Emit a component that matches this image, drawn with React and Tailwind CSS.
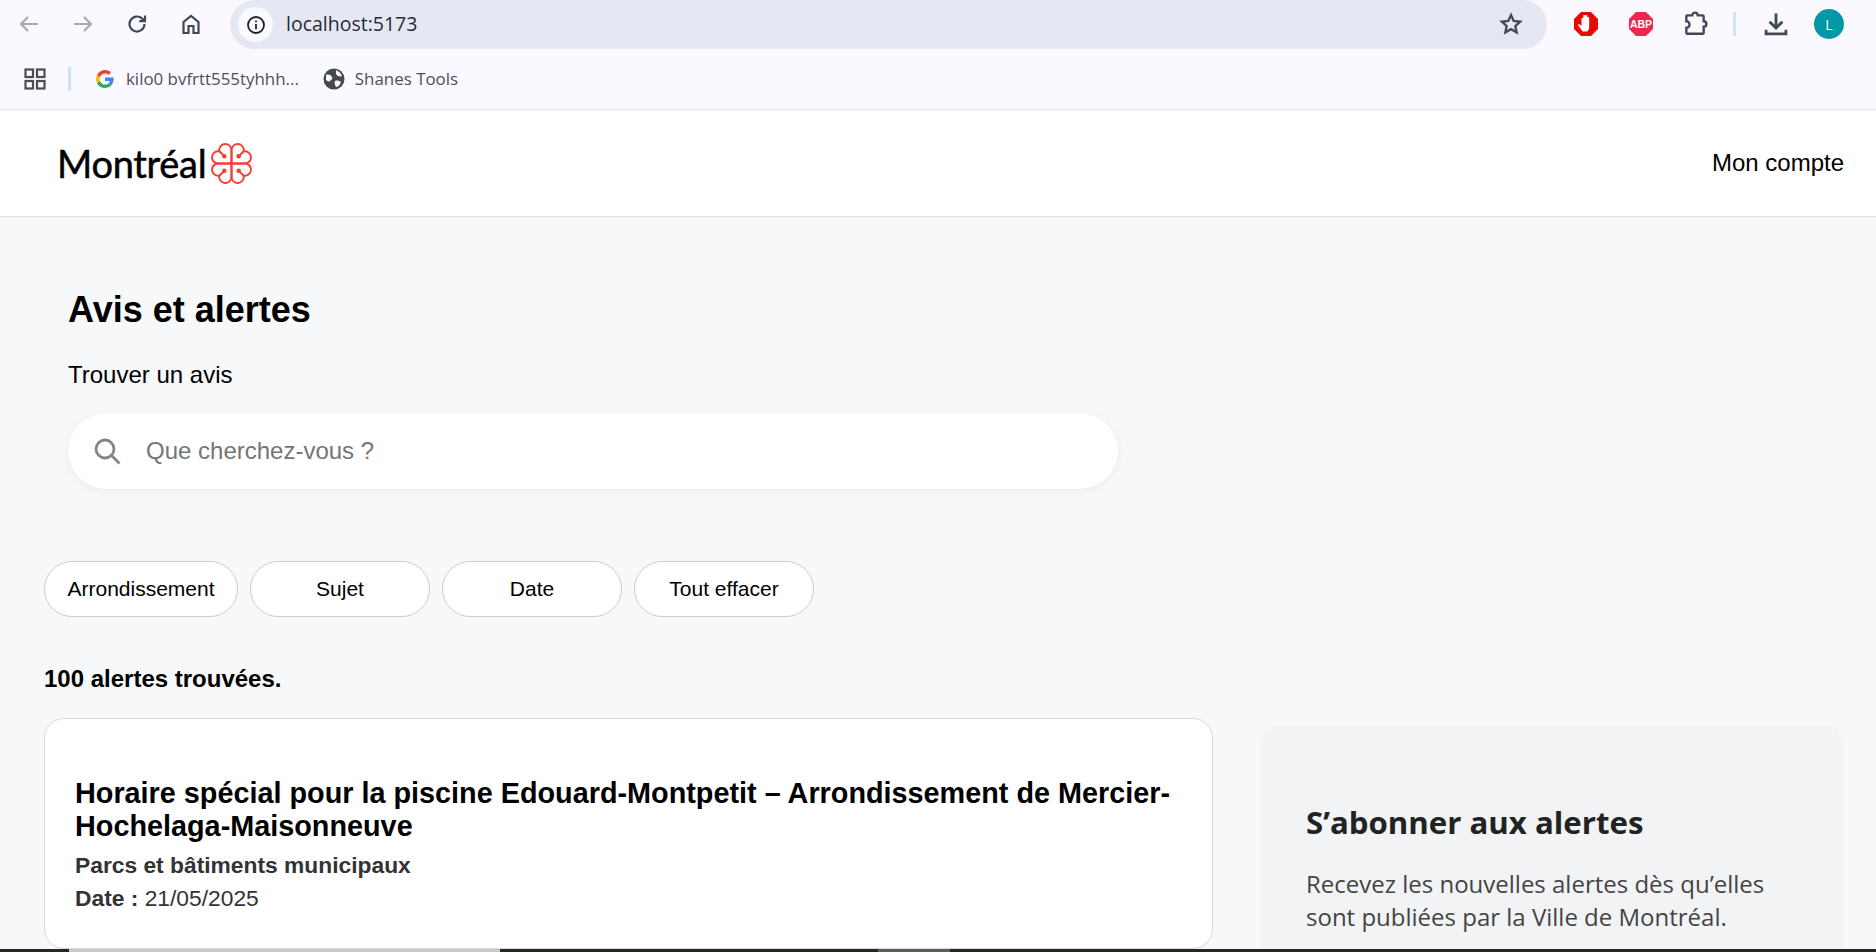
import React from "react";

const sans = "font-['Liberation_Sans',Arial,sans-serif]";

function Emblem() {
  const q = (
    <g>
      <path d="M20 20V7A6 6 0 1 1 31.9 8.100A6 6 0 1 1 33 20H20" />
      <path d="M31.900 8.100L27.500 12.500" />
      <circle cx="27" cy="13" r="2.200" fill="#ef4136" stroke="none" />
    </g>
  );
  return (
    <svg width="41" height="41" viewBox="0 0 40 40" fill="none" stroke="#ef4136" strokeWidth="1.9">
      {q}
      <g transform="rotate(90 20 20)">{q}</g>
      <g transform="rotate(180 20 20)">{q}</g>
      <g transform="rotate(270 20 20)">{q}</g>
    </svg>
  );
}

function GLogo() {
  return (
    <svg width="18" height="18" viewBox="0 0 48 48">
      <path fill="#EA4335" d="M24 9.5c3.5 0 6.7 1.2 9.2 3.6l6.9-6.9C35.9 2.4 30.5 0 24 0 14.6 0 6.5 5.4 2.6 13.2l8 6.2C12.5 13.6 17.8 9.5 24 9.5z" />
      <path fill="#4285F4" d="M47 24.5c0-1.600-.1-3.100-.4-4.500H24v9h12.900c-.6 3-2.200 5.500-4.700 7.200l7.300 5.700C43.900 37.900 47 31.800 47 24.500z" />
      <path fill="#FBBC05" d="M10.500 28.600c-.5-1.400-.8-3-.8-4.600s.3-3.200.8-4.600l-8-6.200C1 16.400 0 20.100 0 24s1 7.600 2.600 10.800l7.900-6.200z" />
      <path fill="#34A853" d="M24 48c6.500 0 11.900-2.100 15.900-5.800l-7.300-5.700c-2.200 1.400-5 2.300-8.600 2.300-6.200 0-11.500-4.200-13.400-9.800l-8 6.200C6.500 42.600 14.600 48 24 48z" />
    </svg>
  );
}

function ToolbarIcon({ children, size = 24, className = "", sw = 2.2 }) {
  return (
    <svg width={size} height={size} viewBox="0 0 24 24" fill="none" stroke="currentColor" strokeWidth={sw} className={className}>
      {children}
    </svg>
  );
}

function Chrome() {
  return (
    <div className="h-[110px] shrink-0 bg-[#faf9ff] border-b border-[#e2e2ef] font-['Open_Sans',sans-serif]">
      <div className="h-[49px] flex items-center pl-[17px]">
        <div className="flex items-center gap-[30px] w-[213px] -mt-[1px]">
          <ToolbarIcon className="text-[#a9abb3]"><path d="M21 12H4M11 5l-7 7 7 7" /></ToolbarIcon>
          <ToolbarIcon className="text-[#a9abb3]"><path d="M3 12h17M13 5l7 7-7 7" /></ToolbarIcon>
          <ToolbarIcon className="text-[#414856]"><path d="M19.500 12a7.500 7.500 0 1 1-2.300-5.400L20 9.200M20 3.500v5.700h-5.700" /></ToolbarIcon>
          <ToolbarIcon className="text-[#414856]"><path d="M4.500 21V10L12 4l7.500 6v11h-5v-7h-5v7z" /></ToolbarIcon>
        </div>
        <div className="w-[1317px] h-[49px] rounded-full bg-[#e5e8f3] flex items-center pl-[8px] pr-[23px]">
          <div className="w-[35px] h-[35px] rounded-full bg-[#faf9ff] flex items-center justify-center">
            <svg width="20" height="20" viewBox="0 0 20 20" fill="none" stroke="#1f1f24" strokeWidth="1.8">
              <circle cx="10" cy="10" r="8" />
              <path d="M10 9v5.200M10 5.400v1.800" />
            </svg>
          </div>
          <span className="ml-[13px] -mt-[1px] text-[19.5px] text-[#252a33]">localhost:5173</span>
          <ToolbarIcon size={26} className="ml-auto -mt-[1px] text-[#474b55]">
            <path d="M12 3.800l2.500 5.400 5.900.7-4.400 4 1.200 5.800-5.200-2.900-5.200 2.900 1.200-5.800-4.400-4 5.900-.7z" />
          </ToolbarIcon>
        </div>
        <div className="flex-1 flex items-center pl-[26px] -mt-[1px]">
          <svg width="26" height="26" viewBox="0 0 26 26">
            <path d="M8 1h10l7 7v10l-7 7H8l-7-7V8z" fill="#e60a05" />
            <path d="M8 20c-1-2-4-5-4.500-7 1-.8 2.500.2 3.500 1.500V7.500c0-1.400 1.800-1.400 1.800 0V12V4.500c0-1.400 2-1.400 2 0V12V4.500c0-1.400 2-1.400 2 0V12V6.500c0-1.400 1.900-1.400 1.900 0v9c0 2-1 4-2 4.500z" fill="#fff" transform="translate(1.500 .5)" />
          </svg>
          <svg width="26" height="26" viewBox="0 0 26 26" className="ml-[29px]">
            <path d="M8 1h10l7 7v10l-7 7H8l-7-7V8z" fill="#f0264c" />
            <text x="13" y="17" textAnchor="middle" fontSize="10.500" fontWeight="700" fill="#fff" fontFamily="Liberation Sans, sans-serif">ABP</text>
          </svg>
          <ToolbarIcon size={26} className="ml-[28px] text-[#414856]">
            <path d="M5 4h4.500a2.500 2.500 0 0 1 5 0H19a1 1 0 0 1 1 1v4.500a2.500 2.500 0 0 1 0 5V20a1 1 0 0 1-1 1H5a1 1 0 0 1-1-1v-4.500a3 3 0 0 0 0-6V5a1 1 0 0 1 1-1z" />
          </ToolbarIcon>
          <div className="ml-[25px] w-[3px] h-[24px] bg-[#d3e0f6]" />
          <ToolbarIcon size={28} className="ml-[26px] text-[#414856]" sw={2.4}>
            <path d="M12 3v12M6.500 10l5.500 5.500 5.500-5.500M3.500 17v3.500h17V17" />
          </ToolbarIcon>
          <div className="ml-[24px] w-[30px] h-[30px] rounded-full bg-[#0097a7] text-white text-[14px] flex items-center justify-center">L</div>
        </div>
      </div>
      <div className="h-[60px] flex items-center pl-[24px]">
        <svg width="22" height="22" viewBox="0 0 22 22" fill="none" stroke="#4a4d55" strokeWidth="2.200">
          <rect x="1.500" y="1.500" width="7.500" height="7.500" />
          <rect x="13" y="1.500" width="7.500" height="7.500" />
          <rect x="1.500" y="13" width="7.500" height="7.500" />
          <rect x="13" y="13" width="7.500" height="7.500" />
        </svg>
        <div className="ml-[22px] w-[3px] h-[24px] bg-[#d3e0f6]" />
        <div className="ml-[25px]"><GLogo /></div>
        <span className="ml-[12px] text-[16.9px] text-[#4b505c]">kilo0 bvfrtt555tyhhh...</span>
        <svg width="22" height="22" viewBox="0 0 22 22" className="ml-[24px]">
          <circle cx="11" cy="11" r="10.500" fill="#454a52" />
          <path d="M3 7c3-1 5 0 6 2s-1 3-2 4-3 0-4-1zM13 2c2 1 5 3 6 6-2 1-5 0-6-2zM12 13c2-1 5 0 6 1-1 3-3 5-5 5-1-2-2-4-1-6z" fill="#faf9ff" />
        </svg>
        <span className="ml-[10px] text-[16.9px] text-[#4b505c]">Shanes Tools</span>
      </div>
    </div>
  );
}

function Pill({ children, className = "" }) {
  return (
    <button className={`h-[56px] rounded-full border border-[#cccccc] bg-white text-[21px] text-black ${className}`}>
      {children}
    </button>
  );
}

export default function App() {
  return (
    <div className={`h-[952px] w-[1876px] overflow-hidden flex flex-col bg-[#f7f8fa] ${sans}`}>
      <Chrome />
      <main className="flex-1 min-h-0 overflow-hidden">
        <header className="h-[107px] bg-white border-b border-[#e2e2e2] flex items-center justify-between pl-[57px] pr-[32px]">
          <div className="flex items-center gap-[5px]">
            <span className="font-['Lato',sans-serif] text-[38px] text-black tracking-[-0.3px] leading-none [-webkit-text-stroke:0.5px_#000]">Montréal</span>
            <Emblem />
          </div>
          <span className="text-[24px] text-black">Mon compte</span>
        </header>

        <section className="pl-[68px] pt-[70px]">
          <h1 className="text-[36px] leading-[46px] font-bold text-black">Avis et alertes</h1>
          <p className="mt-[28px] text-[24px] leading-[28px] text-black">Trouver un avis</p>
          <div className="mt-[24px] w-[1050px] h-[76px] rounded-full bg-white shadow-[0_2px_8px_rgba(0,0,0,0.06)] flex items-center pl-[25px]">
            <svg width="28" height="28" viewBox="0 0 28 28" fill="none" stroke="#858585" strokeWidth="2.800">
              <circle cx="12" cy="12" r="9" />
              <path d="M18.500 18.500l8 8" />
            </svg>
            <span className="ml-[25px] text-[24px] text-[#757575]">Que cherchez-vous ?</span>
          </div>
        </section>

        <div className="pl-[44px] mt-[72px] flex gap-[12px]">
          <Pill className="w-[194px]">Arrondissement</Pill>
          <Pill className="w-[180px]">Sujet</Pill>
          <Pill className="w-[180px]">Date</Pill>
          <Pill className="w-[180px]">Tout effacer</Pill>
        </div>

        <p className="pl-[44px] mt-[48px] text-[24px] leading-[28px] font-bold text-black">100 alertes trouvées.</p>

        <div className="pl-[44px] pr-[32px] mt-[25px] flex gap-[47px] items-start">
          <article className="w-[1169px] h-[231px] shrink-0 rounded-[20px] border border-[#d9d9d9] bg-white px-[30px] pt-[58px]">
            <h2 className="text-[28.8px] leading-[33px] font-bold text-black">
              Horaire spécial pour la piscine Edouard-Montpetit – Arrondissement de Mercier-Hochelaga-Maisonneuve
            </h2>
            <p className="mt-[6px] text-[22.8px] leading-[33px] font-bold text-[#333333]">Parcs et bâtiments municipaux</p>
            <p className="text-[22.8px] leading-[33px] text-[#333333]"><strong>Date :</strong> 21/05/2025</p>
          </article>
          <aside className="flex-1 h-[300px] mt-[7px] rounded-[20px] bg-[#f2f3f5] pl-[46px] pr-[40px] pt-[75px] font-['Open_Sans',sans-serif]">
            <h3 className="text-[31.2px] leading-[44px] font-bold text-[#222222]">S’abonner aux alertes</h3>
            <p className="mt-[23px] text-[24px] leading-[33px] text-[#444444]">
              Recevez les nouvelles alertes dès qu’elles sont publiées par la Ville de Montréal.
            </p>
          </aside>
        </div>
      </main>
      <div className="h-[3px] shrink-0 bg-[#24291f] flex">
        <div className="ml-[69px] w-[431px] bg-[#c8c8c8]" />
        <div className="ml-[378px] w-[72px] bg-[#5a5f56]" />
      </div>
    </div>
  );
}
